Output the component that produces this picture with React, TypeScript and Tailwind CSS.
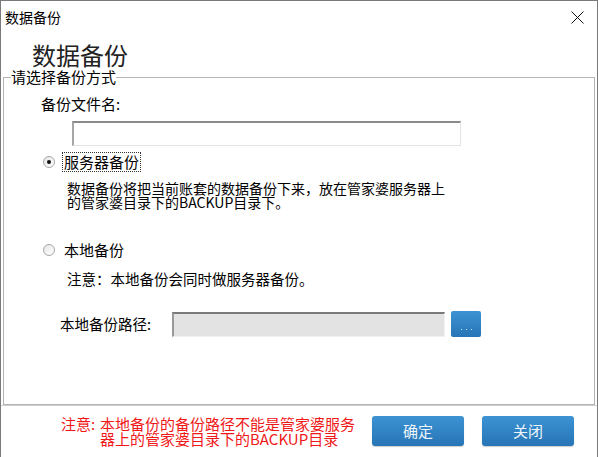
import React from "react";

const font = "font-['Noto_Sans_CJK_SC','Noto_Sans',sans-serif]";

function Radio({ checked }: { checked?: boolean }) {
  return (
    <span className="flex h-[12px] w-[12px] items-center justify-center rounded-full border border-[#a8a8a8] bg-gradient-to-br from-[#e6e6e6] to-white">
      {checked && <span className="h-[4px] w-[4px] rounded-full bg-[#111]" />}
    </span>
  );
}

export default function App() {
  return (
    <div className={`${font} flex h-[457px] w-[598px] flex-col overflow-hidden border-l border-r border-t border-[#7a7a7a] bg-white text-black`}>
      {/* title bar */}
      <div className="flex h-[32px] items-center justify-between pl-[4px] pr-[13px]">
        <span className="text-[14px] leading-[16px]">数据备份</span>
        <svg width="13" height="13" viewBox="0 0 13 13" className="mt-[1px]">
          <path d="M0.5 0.5 L12.5 12.5 M12.5 0.5 L0.5 12.5" stroke="#111" strokeWidth="1" />
        </svg>
      </div>
      {/* header */}
      <div className="pl-[31px] pt-[10px] pb-[2px] text-[24px] leading-[24px] text-[#222]">数据备份</div>
      {/* group box */}
      <fieldset className="mx-[2px] h-[336px] border border-[#b4b4b4] px-0 pb-0">
        <legend className="ml-[7px] text-[15px] leading-[16px]">请选择备份方式</legend>
        <div className="flex flex-col">
          <div className="ml-[37px] mt-[11px] text-[15px] leading-[16px]">备份文件名:</div>
          <div className="ml-[68px] mt-[9px] h-[25px] w-[389px] border-b border-l-2 border-r border-t-2 border-b-[#e4e4e4] border-l-[#a6a6a6] border-r-[#e4e4e4] border-t-[#8a8a8a] bg-white" />
          <div className="mt-[6px] flex items-center">
            <span className="ml-[39px]">
              <Radio checked />
            </span>
            <span className="ml-[7px] border border-dotted border-[#333] px-[1px] text-[15px] leading-[18px]">服务器备份</span>
          </div>
          <div className="ml-[63px] mt-[9px] text-[14px] leading-[14px]">
            数据备份将把当前账套的数据备份下来，放在管家婆服务器上
            <br />
            的管家婆目录下的BACKUP目录下。
          </div>
          <div className="mt-[31px] flex h-[20px] items-center">
            <span className="ml-[39px]">
              <Radio />
            </span>
            <span className="ml-[9px] text-[15px] leading-[18px]">本地备份</span>
          </div>
          <div className="ml-[63px] mt-[11px] text-[14.5px] leading-[16px]">注意：本地备份会同时做服务器备份。</div>
          <div className="mt-[24px] flex items-center">
            <span className="ml-[56px] w-[112px] text-[14.5px] leading-[16px]">本地备份路径:</span>
            <div className="h-[25px] w-[273px] border-b border-l-2 border-r border-t-2 border-b-[#f2f2f2] border-l-[#9a9a9a] border-r-[#f2f2f2] border-t-[#7a7a7a] bg-[#e3e3e3]" />
            <button className="ml-[6px] flex h-[26px] w-[30px] items-end justify-center rounded-[2px] bg-gradient-to-b from-[#3c93d3] to-[#2775b6] pb-[7px]">
              <span className="flex gap-[4px]">
                <span className="h-[1px] w-[1px] bg-[#cfe3f5]" />
                <span className="h-[1px] w-[1px] bg-[#cfe3f5]" />
                <span className="h-[1px] w-[1px] bg-[#cfe3f5]" />
              </span>
            </button>
          </div>
        </div>
      </fieldset>
      <div className="h-[1px] bg-[#cfcfcf]" />
      {/* footer */}
      <div className="flex flex-1 items-start">
        <div className="ml-[60px] mt-[10px] flex text-[15px] leading-[15px] text-[#f01818]">
          <span className="w-[39px]">注意:</span>
          <span>
            本地备份的备份路径不能是管家婆服务
            <br />
            器上的管家婆目录下的BACKUP目录
          </span>
        </div>
        <div className="ml-auto mr-[23px] mt-[10px] flex gap-[18px]">
          <button className="h-[30px] w-[92px] rounded-[3px] bg-gradient-to-b from-[#3c93d3] to-[#2775b6] text-[15px] text-[#eef5fb] shadow-[0_1px_1px_rgba(0,0,0,0.2)]">确定</button>
          <button className="h-[30px] w-[92px] rounded-[3px] bg-gradient-to-b from-[#3c93d3] to-[#2775b6] text-[15px] text-[#eef5fb] shadow-[0_1px_1px_rgba(0,0,0,0.2)]">关闭</button>
        </div>
      </div>
    </div>
  );
}
